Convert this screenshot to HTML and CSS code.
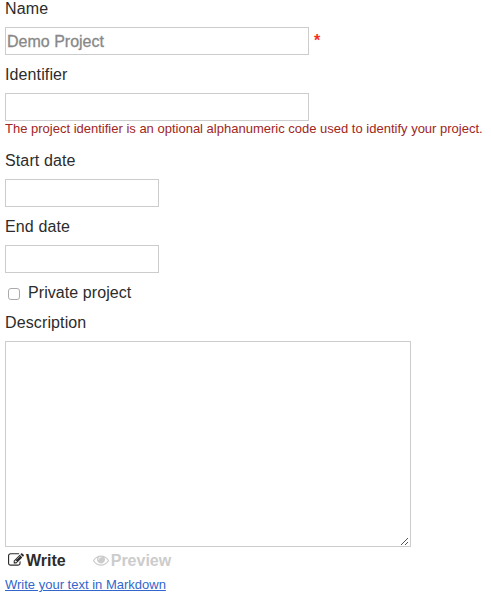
FILE: index.html
```html
<!DOCTYPE html>
<html lang="en">
<head>
<meta charset="utf-8">
<title>Edit project</title>
<link rel="stylesheet" href="styles.css">
</head>
<body>
<form class="form">
  <label class="label" for="name">Name</label>
  <div class="row"><input class="input name" id="name" type="text" placeholder="Demo Project"><span class="required">*</span></div>
  <label class="label" for="identifier">Identifier</label>
  <input class="input" id="identifier" type="text">
  <p class="help">The project identifier is an optional alphanumeric code used to identify your project.</p>
  <label class="label" for="start">Start date</label>
  <input class="input date" id="start" type="text">
  <label class="label" for="end">End date</label>
  <input class="input date" id="end" type="text">
  <label class="check"><input class="checkbox" type="checkbox"><span>Private project</span></label>
  <label class="label description" for="description">Description</label>
  <div class="editor">
    <textarea class="textarea" id="description"></textarea>
    <svg class="grip" viewBox="0 0 8 8" shape-rendering="crispEdges"><path d="M0 7h1v-1h1v-1h1v-1h1v-1h1v-1h1v-1h1v-1h1v-1h-1v1h-1v1h-1v1h-1v1h-1v1h-1v1h-1zM4 7h1v-1h1v-1h1v-1h-1v1h-1v1h-1z"/></svg>
  </div>
  <div class="tabs">
    <a class="tab write"><svg class="icon" viewBox="0 0 1792 1792"><path d="M888 1184l116-116-152-152-116 116v56h96v96h56zm440-720q-16-16-33 1l-350 350q-17 17-1 33t33-1l350-350q17-17 1-33zm80 594v190q0 119-84.500 203.500t-203.500 84.500h-832q-119 0-203.500-84.500t-84.500-203.500v-832q0-119 84.500-203.500t203.500-84.500h832q63 0 117 25 15 7 18 23 3 17-9 29l-49 49q-14 14-32 8-23-6-45-6h-832q-66 0-113 47t-47 113v832q0 66 47 113t113 47h832q66 0 113-47t47-113v-126q0-13 9-22l64-64q15-15 35-7t20 29zm-96-738l288 288-672 672h-288v-288zm444 132l-92 92-288-288 92-92q28-28 68-28t68 28l152 152q28 28 28 68t-28 68z"/></svg><span>Write</span></a>
    <a class="tab preview"><svg class="icon" viewBox="0 0 1792 1792"><path d="M1664 960q-152-236-381-353 61 104 61 225 0 185-131.500 316.500t-316.500 131.500-316.500-131.500-131.500-316.500q0-121 61-225-229 117-381 353 133 205 333.500 326.500t434.500 121.500 434.500-121.500 333.500-326.500zm-720-384q0-20-14-34t-34-14q-125 0-214.500 89.500t-89.500 214.500q0 20 14 34t34 14 34-14 14-34q0-86 61-147t147-61q20 0 34-14t14-34zm848 384q0 34-20 69-140 230-376.500 368.500t-499.500 138.500-499.500-139-376.500-368q-20-35-20-69t20-69q140-229 376.500-368t499.500-139 499.500 139 376.500 368q20 35 20 69z"/></svg><span>Preview</span></a>
  </div>
  <a class="markdown" href="#">Write your text in Markdown</a>
</form>
</body>
</html>
```
FILE: styles.css
```css
* { box-sizing: border-box; }
body {
  margin: 0;
  background: #fff;
  color: #2c2c2c;
  font: 16px/20px "Liberation Sans", Arial, sans-serif;
}
.form {
  display: flex;
  flex-direction: column;
  align-items: flex-start;
  padding: 0 0 0 5px;
  height: 598px;
  overflow: hidden;
}
.label { height: 20px; margin: 10px 0 8px; letter-spacing: 0.12px; }
.label:first-child { margin-top: -1px; }
.row { display: flex; }
.input {
  width: 304px;
  height: 28px;
  margin: 0;
  padding: 0 1px;
  border: 1px solid #ccc;
  border-radius: 0;
  font: inherit;
  background: #fff;
}
.name { padding-top: 2px; }
.input::placeholder { color: #888; opacity: 1; -webkit-text-stroke: 0.3px #888; }
.input.date { width: 154px; }
.required { margin-left: 5px; line-height: 27px; font-weight: bold; color: #f0321e; }
.help {
  height: 20px;
  margin: 0;
  font-size: 13px;
  line-height: 16px;
  color: #a02622;
  white-space: nowrap;
}
.check { display: flex; height: 20px; margin-top: 10px; letter-spacing: 0.07px; }
.checkbox {
  appearance: none;
  width: 12px;
  height: 12px;
  margin: 5px 8px 0 3px;
  border: 1px solid #aaa;
  border-radius: 3px;
}
.description { margin-top: 10px; }
.editor { position: relative; width: 406px; height: 206px; }
.textarea {
  display: block;
  width: 100%;
  height: 100%;
  margin: 0;
  border: 1px solid #ccc;
  resize: none;
  font: inherit;
}
.grip { position: absolute; right: 2px; bottom: 1px; width: 8px; height: 8px; fill: #555; }
.tabs { display: flex; height: 20px; margin: 4px 0 0 3px; gap: 27px; font-weight: bold; }
.tab { display: flex; gap: 2px; }
.icon { width: 16px; height: 16px; margin-top: 1px; fill: currentColor; }
.preview { color: #ccc; }
.markdown { margin-top: 4px; font-size: 13px; color: #36c; text-decoration: underline; }
```
